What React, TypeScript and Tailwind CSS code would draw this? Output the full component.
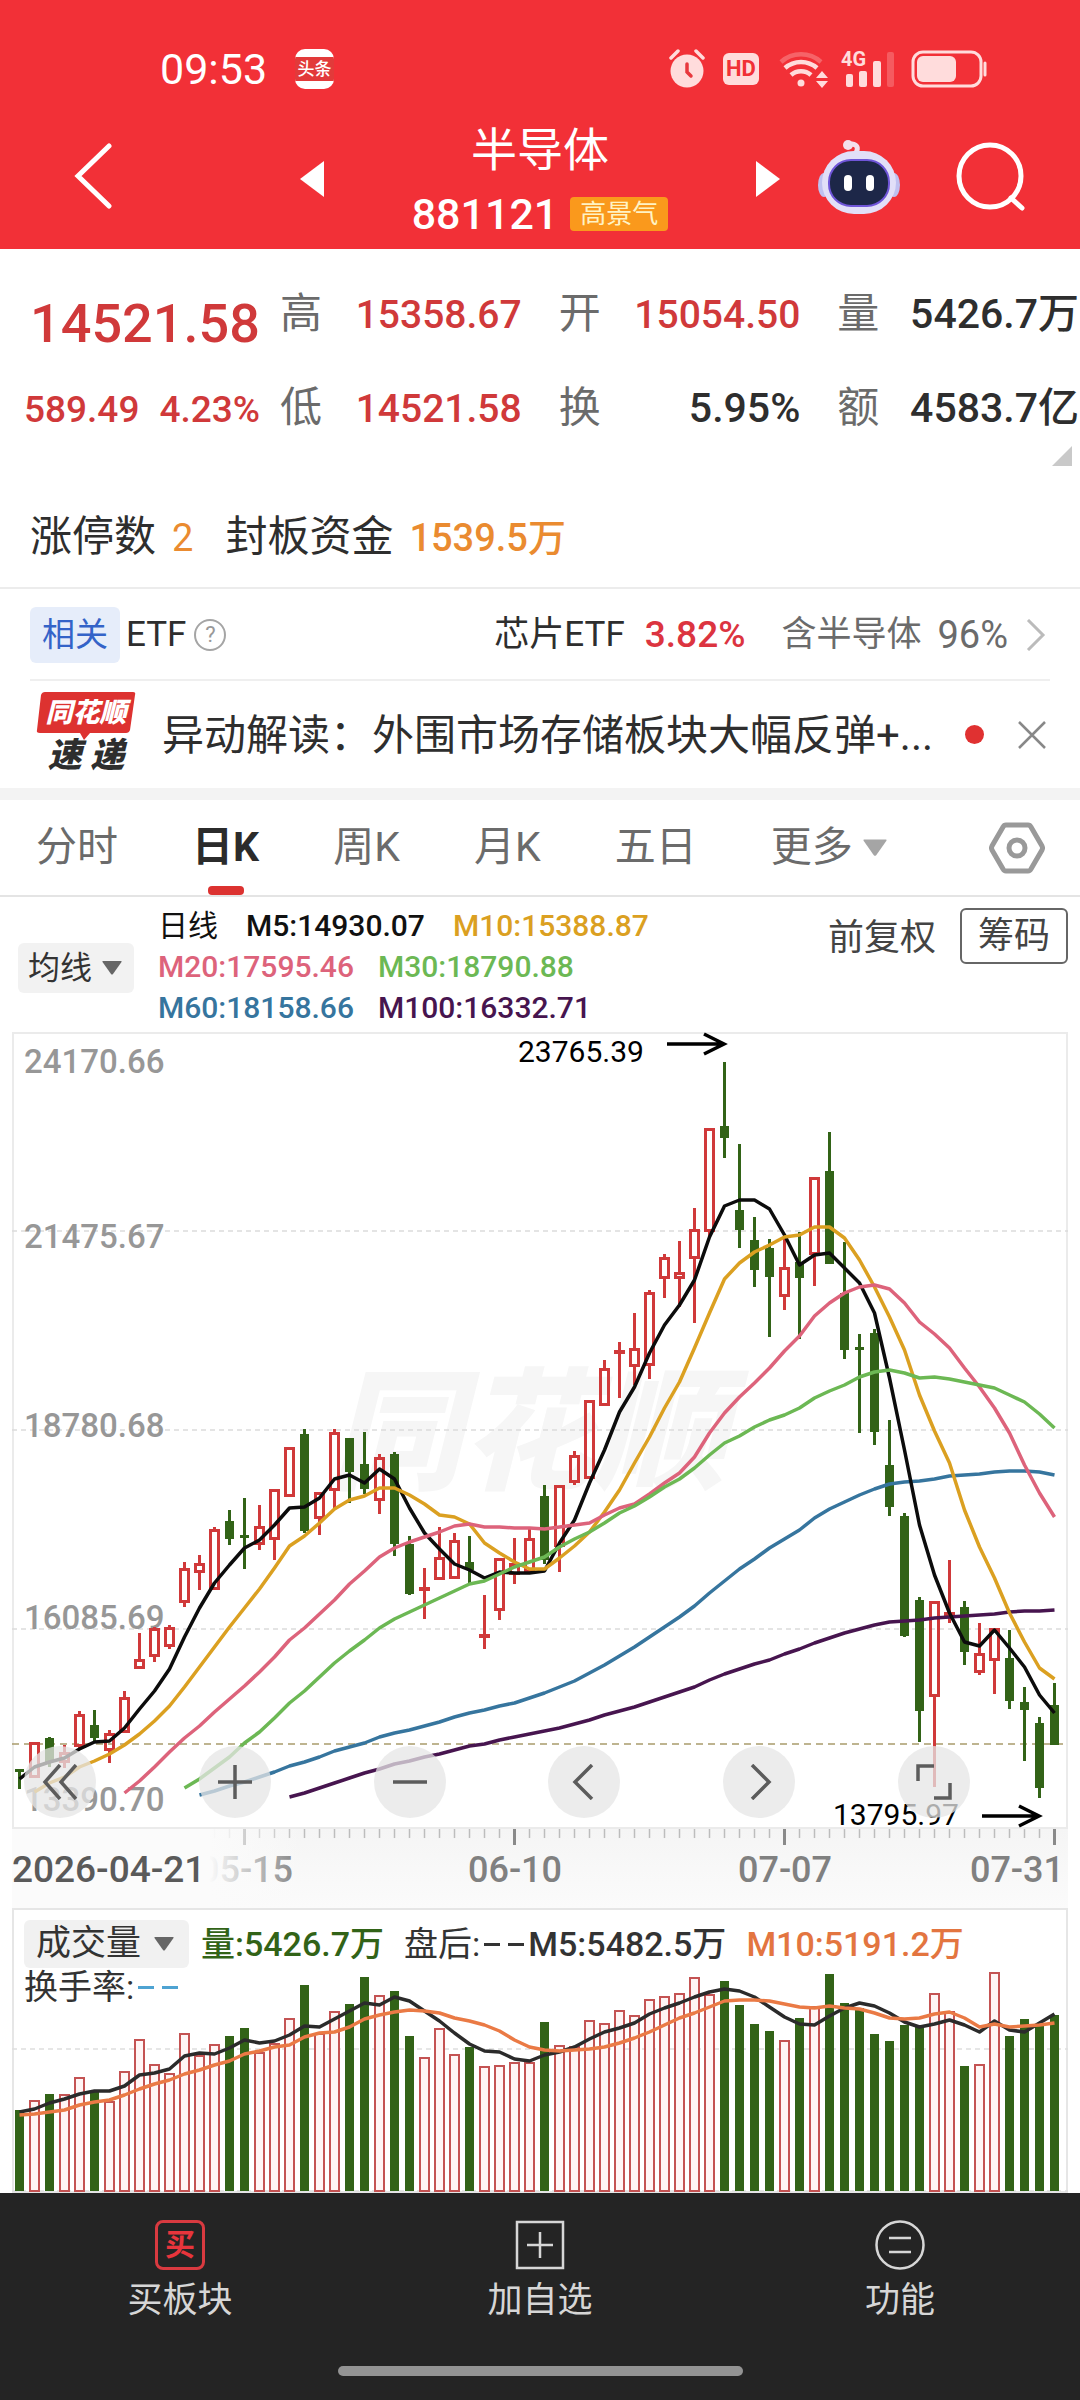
import type { ReactNode } from 'react'

const UP = '#d0393a'
const DOWN = '#326317'

// [rising, high, body top, body bottom, low, volume top]
const candles: [number, number, number, number, number, number][] = [
  [0, 737, 737, 740, 757, 202], [1, 710, 710, 746, 746, 192], [0, 705, 706, 730, 735, 186], [1, 713, 720, 731, 736, 186],
  [1, 679, 682, 715, 718, 169], [0, 678, 693, 706, 710, 184], [1, 698, 701, 719, 731, 193], [1, 659, 665, 701, 701, 163],
  [1, 601, 627, 637, 637, 131], [1, 595, 596, 625, 630, 156], [1, 593, 595, 615, 617, 165], [1, 530, 536, 571, 575, 125],
  [1, 523, 531, 541, 558, 147], [1, 495, 497, 558, 558, 136], [0, 478, 489, 507, 513, 128], [0, 466, 503, 506, 537, 120],
  [1, 473, 494, 513, 518, 144], [1, 457, 457, 508, 528, 135], [1, 415, 415, 465, 465, 110], [0, 397, 402, 499, 501, 77],
  [1, 460, 460, 487, 503, 125], [1, 397, 400, 459, 476, 103], [0, 406, 406, 440, 471, 96], [0, 400, 432, 457, 462, 69],
  [1, 422, 425, 469, 482, 87], [0, 420, 422, 512, 524, 83], [0, 504, 512, 562, 563, 128], [1, 536, 555, 559, 587, 149],
  [1, 495, 525, 548, 548, 120], [1, 501, 508, 547, 547, 146], [0, 504, 530, 538, 553, 139], [1, 563, 602, 606, 617, 158],
  [1, 526, 526, 579, 588, 157], [1, 506, 531, 543, 552, 154], [1, 496, 506, 541, 541, 154], [0, 453, 464, 528, 532, 114],
  [1, 453, 453, 515, 540, 137], [1, 419, 423, 451, 453, 138], [1, 368, 368, 447, 447, 112], [1, 328, 336, 374, 374, 115],
  [1, 310, 318, 321, 366, 102], [1, 281, 316, 335, 353, 107], [1, 258, 260, 334, 347, 91], [1, 222, 225, 247, 266, 88],
  [1, 209, 240, 247, 275, 85], [1, 176, 197, 227, 291, 69], [1, 96, 96, 200, 205, 86], [0, 30, 94, 106, 126, 73],
  [0, 112, 178, 198, 216, 97], [0, 185, 208, 238, 255, 116], [0, 207, 216, 245, 305, 123], [1, 206, 235, 265, 278, 132],
  [0, 200, 230, 246, 307, 110], [1, 145, 145, 223, 254, 98], [0, 100, 139, 232, 232, 66], [0, 210, 261, 318, 327, 95],
  [0, 302, 315, 318, 401, 100], [0, 297, 301, 400, 413, 126], [0, 388, 433, 475, 484, 133], [0, 481, 484, 604, 605, 117],
  [0, 565, 568, 679, 710, 119], [1, 569, 569, 665, 755, 85], [1, 528, 580, 583, 591, 103], [0, 569, 575, 620, 633, 158],
  [1, 591, 621, 641, 643, 156], [1, 596, 596, 629, 662, 64], [0, 598, 626, 669, 677, 128], [0, 655, 670, 678, 729, 111],
  [0, 685, 691, 756, 766, 117], [0, 651, 673, 713, 713, 107],
]

const averages = [
  { from: 18, color: '#47154f', ys: [765, 761, 756, 751, 746, 741, 737, 732, 729, 725, 722, 718, 714, 712, 708, 705, 702, 699, 696, 692, 688, 683, 679, 675, 670, 665, 660, 655, 648, 642, 637, 632, 628, 622, 617, 611, 606, 601, 597, 593, 590, 589, 588, 586, 585, 584, 583, 582, 580, 579, 579, 578] },
  { from: 12, color: '#36759e', ys: [763, 759, 754, 750, 745, 740, 734, 730, 725, 719, 715, 711, 705, 701, 698, 694, 690, 685, 681, 678, 674, 671, 666, 661, 655, 649, 641, 633, 624, 615, 605, 595, 585, 574, 561, 549, 537, 527, 516, 507, 498, 486, 477, 470, 463, 457, 452, 450, 449, 447, 444, 443, 442, 440, 439, 439, 440, 443] },
  { from: 0, color: '#0c0c0c', ys: [747, 735, 730, 726, 717, 710, 709, 696, 677, 659, 637, 605, 576, 551, 533, 516, 508, 493, 476, 475, 466, 447, 443, 451, 437, 447, 476, 501, 517, 532, 538, 546, 540, 541, 541, 539, 511, 488, 451, 418, 380, 355, 321, 293, 273, 248, 205, 174, 168, 168, 177, 203, 233, 223, 221, 236, 251, 281, 346, 418, 493, 543, 581, 610, 614, 598, 616, 635, 663, 681] },
  { from: 1, color: '#dba021', ys: [760, 751, 745, 735, 729, 722, 713, 702, 689, 674, 655, 635, 615, 595, 576, 557, 536, 514, 504, 491, 477, 468, 464, 456, 456, 463, 472, 483, 485, 492, 511, 521, 530, 537, 537, 526, 514, 500, 480, 458, 431, 405, 376, 350, 316, 281, 247, 231, 220, 213, 205, 203, 195, 195, 206, 228, 255, 285, 318, 363, 399, 431, 478, 515, 546, 581, 610, 636, 647] },
  { from: 7, color: '#dd637b', ys: [761, 749, 735, 720, 706, 694, 680, 667, 654, 640, 625, 608, 596, 582, 568, 552, 539, 525, 516, 510, 505, 500, 494, 492, 495, 495, 496, 496, 497, 495, 493, 491, 483, 476, 472, 462, 451, 441, 425, 401, 381, 365, 351, 336, 319, 304, 284, 271, 261, 255, 253, 257, 271, 290, 302, 316, 336, 355, 376, 401, 433, 461, 485] },
  { from: 11, color: '#6cb854', ys: [756, 747, 736, 725, 711, 700, 686, 671, 659, 645, 631, 619, 608, 596, 587, 580, 573, 566, 559, 552, 549, 542, 535, 530, 525, 515, 507, 500, 491, 481, 474, 465, 455, 447, 436, 423, 411, 404, 395, 388, 383, 376, 366, 359, 353, 345, 340, 338, 341, 346, 345, 347, 350, 353, 356, 363, 370, 382, 396] },
]

const volumeAverages = [
  { from: 0, color: '#2b2b2b', ys: [204, 201, 195, 191, 186, 183, 183, 178, 167, 165, 161, 148, 145, 146, 140, 132, 135, 133, 127, 118, 119, 111, 103, 95, 97, 89, 93, 103, 113, 125, 136, 143, 144, 151, 153, 147, 144, 139, 131, 124, 120, 115, 106, 100, 95, 89, 84, 81, 83, 89, 99, 109, 116, 117, 108, 100, 95, 98, 105, 114, 119, 116, 112, 117, 124, 113, 122, 124, 115, 106] },
  { from: 0, color: '#ea7a45', ys: [207, 206, 204, 202, 197, 194, 192, 187, 181, 176, 172, 166, 162, 157, 153, 146, 143, 139, 137, 129, 125, 124, 119, 111, 107, 104, 102, 103, 105, 110, 113, 117, 123, 132, 139, 142, 143, 142, 141, 139, 135, 130, 124, 117, 110, 105, 99, 93, 92, 92, 93, 96, 99, 100, 98, 100, 101, 105, 110, 111, 110, 106, 104, 110, 119, 116, 119, 118, 117, 115] },
]

const cx = (i: number) => 7.5 + i * 15

const Line = ({ from, color, ys }: { from: number; color: string; ys: number[] }) => (
  <polyline
    points={ys.map((y, i) => `${cx(from + i)},${y}`).join(' ')}
    fill="none"
    stroke={color}
    strokeWidth="3.500"
    strokeLinejoin="round"
  />
)

const Caret = ({ className }: { className: string }) => (
  <svg viewBox="0 0 20 14" className={`pointer-events-none absolute ${className}`} fill="currentColor">
    <path d="M1 0h18q1 0 .5 1L11 13q-1 1-2 0L.5 1Q0 0 1 0z" />
  </svg>
)

const StatusBar = () => (
  <div className="flex h-[120px] items-center justify-between pt-[18px] pr-[93px] pl-40">
    <div className="flex items-center gap-7">
      <span className="text-[43px] leading-[50px]">09:53</span>
      <span className="flex h-10 w-[39px] items-center overflow-hidden rounded-[10px] bg-white">
        <span className="w-full bg-[#e23a3a] text-center text-[17px] leading-6 font-medium">头条</span>
      </span>
    </div>
    <div className="flex items-center text-[#ffdcdc]">
      <svg viewBox="0 0 36 40" className="h-10 w-9" fill="none" stroke="currentColor">
        <circle cx="18" cy="22" r="16.500" fill="currentColor" stroke="none" />
        <path d="M2 9l7-7M34 9l-7-7" strokeWidth="3.500" strokeLinecap="round" />
        <path d="M18 15v8l4 4" stroke="#e8383e" strokeWidth="3.500" strokeLinecap="round" />
      </svg>
      <span className="ml-[18px] h-8 w-9 rounded-md bg-[#ffdcdc] text-center text-[22px] leading-8 font-bold text-[#f13036]">HD</span>
      <svg viewBox="0 0 50 40" className="ml-5 h-10 w-[50px]" fill="none" stroke="currentColor" strokeWidth="4.500">
        <path d="M2 13a30 30 0 0 1 40 0" opacity=".3" />
        <path d="M6 19a24 24 0 0 1 32 0M12 26a15 15 0 0 1 20 0" />
        <circle cx="22" cy="34" r="3.500" fill="currentColor" stroke="none" />
        <path d="M37 29l6-7 6 7zM37 32l6 7 6-7z" fill="currentColor" stroke="none" />
      </svg>
      <div className="relative ml-3 h-10 w-[54px]">
        <span className="absolute top-0 left-0 text-[20px] leading-5 font-bold">4G</span>
        <svg viewBox="0 0 54 40" className="h-10 w-[54px]" fill="currentColor">
          <rect x="5" y="25" width="7" height="13" rx="2" />
          <rect x="18" y="22" width="8" height="16" rx="2" />
          <rect x="32" y="12" width="8" height="26" rx="2" />
          <rect x="46" y="3" width="7" height="35" rx="2" opacity=".25" />
        </svg>
      </div>
      <svg viewBox="0 0 76 38" className="ml-4 h-[38px] w-[76px]" fill="none" stroke="currentColor">
        <rect x="2" y="2" width="68" height="34" rx="10" strokeWidth="3" />
        <rect x="6" y="6" width="39" height="26" rx="6" fill="currentColor" stroke="none" />
        <path d="M74 13v12" strokeWidth="3" strokeLinecap="round" />
      </svg>
    </div>
  </div>
)

const RobotIcon = () => (
  <svg viewBox="0 0 82 76" className="h-[76px] w-[82px]">
    <path d="M38 14q4-8-4-9" fill="none" stroke="#f4dfec" strokeWidth="5" strokeLinecap="round" />
    <circle cx="30" cy="6" r="5" fill="#f4dfec" />
    <ellipse cx="6" cy="46" rx="6" ry="12" fill="#bfc0f0" />
    <ellipse cx="76" cy="46" rx="6" ry="12" fill="#bfc0f0" />
    <rect x="4" y="12" width="74" height="63" rx="32" fill="#e2dff8" />
    <rect x="11" y="21" width="60" height="46" rx="22" fill="#1d2748" stroke="#6f55d8" strokeWidth="2" />
    <rect x="26" y="36" width="8" height="16" rx="4" fill="#fff" />
    <rect x="48" y="36" width="8" height="16" rx="4" fill="#fff" />
  </svg>
)

const TitleRow = () => (
  <div className="grid h-[129px] grid-cols-[1fr_480px_1fr]">
    <div className="flex items-center pb-[18px] pl-[74px]">
      <button aria-label="返回">
        <svg viewBox="0 0 38 66" className="h-[66px] w-[38px]" fill="none" stroke="currentColor" strokeWidth="5">
          <path d="M35 3L4 33l31 30" strokeLinecap="round" />
        </svg>
      </button>
    </div>
    <div className="flex items-center justify-between">
      <button aria-label="上一个" className="pb-3">
        <svg viewBox="0 0 24 36" className="h-9 w-6" fill="currentColor"><path d="M24 0v36L0 18z" /></svg>
      </button>
      <div className="flex flex-col items-center">
        <h1 className="text-[46px] leading-[58px]">半导体</h1>
        <div className="flex h-[70px] items-center gap-3">
          <span className="text-[43px] leading-[50px] font-medium">881121</span>
          <span className="rounded-sm bg-[#fa991c] px-[10px] text-[26px] leading-[34px] text-[#fff3c4]">高景气</span>
        </div>
      </div>
      <button aria-label="下一个" className="pb-3">
        <svg viewBox="0 0 24 36" className="h-9 w-6" fill="currentColor"><path d="M0 0v36l24-18z" /></svg>
      </button>
    </div>
    <div className="flex items-center justify-between pr-[54px] pb-4 pl-[38px]">
      <button aria-label="助手"><RobotIcon /></button>
      <button aria-label="搜索">
        <svg viewBox="0 0 70 70" className="size-[70px]" fill="none" stroke="currentColor" strokeWidth="5">
          <circle cx="34" cy="34" r="31" />
          <path d="M55 56l11 10" strokeLinecap="round" />
        </svg>
      </button>
    </div>
  </div>
)

const Quote = ({ label, value, up }: { label: string; value: string; up?: boolean }) => (
  <div className="flex items-baseline justify-between">
    <dt className="text-[42px] text-[#6b6b6b]">{label}</dt>
    <dd className={`font-medium ${up ? 'text-[39px] text-[#d0393a]' : 'text-[41px] text-[#2e2e2e]'}`}>{value}</dd>
  </div>
)

const QuotePanel = () => (
  <section className="border-b-2 border-[#ececec] pb-6">
    <div className="relative flex pt-[41px] pr-[1px]">
      <div className="w-[280px] shrink-0 font-medium text-[#d0393a]">
        <p className="pl-[30px] text-[54px] leading-[68px]">14521.58</p>
        <p className="flex gap-5 pt-7 pl-6 text-[37px] leading-12">
          <span>589.49</span>
          <span>4.23%</span>
        </p>
      </div>
      <dl className="grid grow grid-cols-3 gap-x-[37px] gap-y-11 leading-12">
        <Quote label="高" value="15358.67" up />
        <Quote label="开" value="15054.50" up />
        <Quote label="量" value="5426.7万" />
        <Quote label="低" value="14521.58" up />
        <Quote label="换" value="5.95%" />
        <Quote label="额" value="4583.7亿" />
      </dl>
      <svg viewBox="0 0 20 20" className="absolute right-2 -bottom-8 size-5" fill="#c9c9c9"><path d="M20 0v20H0z" /></svg>
    </div>
    <p className="flex items-baseline pt-[78px] pl-[30px] text-[42px] leading-[50px] text-[#2e2e2e]">
      涨停数
      <span className="ml-4 text-[38px] text-[#ea8b30]">2</span>
      <span className="ml-8">封板资金</span>
      <span className="ml-4 text-[38px] font-medium text-[#ea8b30]">1539.5万</span>
    </p>
  </section>
)

const EtfRow = () => (
  <div className="mx-[30px] flex h-[92px] items-center border-b-2 border-[#efefef] pt-[2px] text-[35px] text-[#2e2e2e]">
    <span className="rounded-md bg-[#e6edfa] px-3 text-[33px] leading-14 text-[#3463c8]">相关</span>
    <span className="ml-[6px]">ETF</span>
    <button aria-label="说明" className="ml-2 size-8 rounded-full border-2 border-[#a5a5a5] text-[22px] leading-7 text-[#999]">?</button>
    <a href="#etf" className="ml-auto flex items-center">
      <span>芯片ETF</span>
      <span className="ml-5 text-[37px] font-medium text-[#dc3440]">3.82%</span>
      <span className="ml-9 text-[#6b6b6b]">含半导体</span>
      <span className="ml-4 text-[38px] text-[#6b6b6b]">96%</span>
      <svg viewBox="0 0 20 32" className="mr-1 ml-[18px] h-8 w-5" fill="none" stroke="#bbb" strokeWidth="3"><path d="M2 1l15 15L2 31" /></svg>
    </a>
  </div>
)

const NewsRow = () => (
  <div className="flex h-[107px] items-center pr-[34px] pl-9 text-[#2e2e2e]">
    <div className="relative flex w-[100px] flex-col items-center pb-1 italic">
      <svg viewBox="0 0 100 50" className="absolute top-0 left-0 h-[50px] w-[100px]" fill="#dd3230">
        <path d="M9 1h88q3 0 2 3l-5 35q-1 3-4 3H54l-6 7-4-7H4q-4 0-3-3L5 4q1-3 4-3z" />
      </svg>
      <span className="relative text-[27px] leading-11 font-black text-white">同花顺</span>
      <span className="text-[34px] leading-10 font-black">速 递</span>
    </div>
    <a href="#news" className="ml-[26px] truncate pt-[3px] text-[42px] leading-[60px]">异动解读：外围市场存储板块大幅反弹+...</a>
    <span className="ml-auto size-[19px] shrink-0 rounded-full bg-[#e03131]" />
    <button aria-label="关闭" className="ml-[34px] shrink-0">
      <svg viewBox="0 0 28 28" className="size-7" fill="none" stroke="#888" strokeWidth="2.500"><path d="M1 1l26 26M27 1L1 27" /></svg>
    </button>
  </div>
)

const Tabs = () => (
  <nav className="flex h-[97px] items-center justify-between border-b-2 border-[#e4e4e4] pr-[35px] pl-9 text-[41px] text-[#6b6b6b]">
    <button>分时</button>
    <button className="relative h-full font-bold text-[#2b2b2b]">
      日K
      <span className="absolute inset-x-0 bottom-0 mx-auto h-[9px] w-9 rounded bg-[#dc3230]" />
    </button>
    <button>周K</button>
    <button>月K</button>
    <button>五日</button>
    <label className="relative flex text-[#6b6b6b]">
      <select aria-label="更多周期" className="appearance-none pr-[34px] outline-none"><option>更多</option></select>
      <Caret className="top-[21px] right-0 h-5 w-6 text-[#a5a5a5]" />
    </label>
    <button aria-label="设置" className="ml-7">
      <svg viewBox="0 0 56 52" className="h-[52px] w-14" fill="none" stroke="#999" strokeWidth="5">
        <path d="M17 3h22q2 0 3 2l11 19q1 2 0 4L42 47q-1 2-3 2H17q-2 0-3-2L3 28q-1-2 0-4L14 5q1-2 3-2z" />
        <circle cx="28" cy="26" r="8" />
      </svg>
    </button>
  </nav>
)

const Legend = () => (
  <div className="flex h-[135px] pr-3 pl-[18px]">
    <label className="relative mt-[46px] flex h-[50px] w-[116px] shrink-0 rounded-md bg-[#f2f2f2] text-[32px] text-[#333]">
      <select aria-label="指标" className="w-full appearance-none pl-[10px] leading-[50px] outline-none"><option>均线</option></select>
      <Caret className="top-[18px] right-3 h-[14px] w-5 text-[#666]" />
    </label>
    <div className="ml-6 pt-2 text-[30px] leading-[41px] font-medium">
      <p className="flex gap-7 text-[#111]">
        <span className="font-normal">日线</span>
        <span>M5:14930.07</span>
        <span className="text-[#dba021]">M10:15388.87</span>
      </p>
      <p className="flex gap-6">
        <span className="text-[#dd637b]">M20:17595.46</span>
        <span className="text-[#6cb854]">M30:18790.88</span>
      </p>
      <p className="flex gap-6">
        <span className="text-[#36759e]">M60:18158.66</span>
        <span className="text-[#47154f]">M100:16332.71</span>
      </p>
    </div>
    <div className="ml-auto flex items-start gap-6 pt-[11px] text-[36px] leading-[52px] text-[#444]">
      <button className="pt-1">前复权</button>
      <button className="rounded-md border-2 border-[#666] px-4">筹码</button>
    </div>
  </div>
)

const gridLabels: [string, number][] = [['24170.66', 41], ['21475.67', 216], ['18780.68', 405], ['16085.69', 597], ['13390.70', 779]]

const RoundButton = ({ label, children }: { label: string; children: ReactNode }) => (
  <button aria-label={label} className="flex size-[72px] items-center justify-center rounded-full bg-[#e6e6e6]/75">
    <svg viewBox="0 0 36 36" className="size-9" fill="none" stroke="#5c5c5c" strokeWidth="3.500">{children}</svg>
  </button>
)

const PriceChart = () => (
  <div className="relative mx-3 ring-2 ring-[#ebebeb] ring-inset">
    <svg viewBox="0 0 1056 797" className="block w-full overflow-visible">
      <text x="318" y="447" fontSize="132" fontWeight="900" fontStyle="italic" fill="#f6f6f6">同花顺</text>
      {[199, 398, 597].map((y) => (
        <path key={y} d={`M0 ${y}H1056`} stroke="#dcdcdc" strokeWidth="1.500" strokeDasharray="5 4" />
      ))}
      <g fill="#979797" fontSize="33" fontWeight="500">
        {gridLabels.map(([text, y]) => <text key={text} x="12" y={y}>{text}</text>)}
      </g>
      <path d="M0 712H1056" stroke="#a99c6c" strokeWidth="1.500" strokeDasharray="7 5" />
      {candles.map(([rising, high, top, bottom, low], i) => rising ? (
        <g key={i} fill="none" stroke={UP} strokeWidth="3">
          <path d={`M${cx(i)} ${high}V${top}M${cx(i)} ${bottom}V${low}`} />
          <rect x={cx(i) - 4} y={top + 1.5} width="8" height={Math.max(bottom - top - 3, 1)} />
        </g>
      ) : (
        <g key={i} fill={DOWN}>
          <rect x={cx(i) - 1.5} y={high} width="3" height={low - high} />
          <rect x={cx(i) - 4.5} y={top} width="9" height={bottom - top} />
        </g>
      ))}
      {averages.map((line) => <Line key={line.color} {...line} />)}
      <text x="506" y="30" fontSize="30">23765.39</text>
      <text x="821" y="793" fontSize="30">13795.97</text>
      <path d="M655 12h57M692 2l20 10-20 10M970 784h57M1007 774l20 10-20 10" fill="none" stroke="#000" strokeWidth="3.500" />
    </svg>
    <div className="absolute right-[98px] bottom-[11px] left-3 flex justify-between">
      <RoundButton label="最早"><path d="M18 1L3 18l15 17M34 1L19 18l15 17" /></RoundButton>
      <RoundButton label="放大"><path d="M18 1v34M1 18h34" /></RoundButton>
      <RoundButton label="缩小"><path d="M1 18h34" /></RoundButton>
      <RoundButton label="向左"><path d="M26 1L9 18l17 17" /></RoundButton>
      <RoundButton label="向右"><path d="M11 1l17 17-17 17" /></RoundButton>
      <RoundButton label="全屏"><path d="M2 17V2h16M34 19v15H18" /></RoundButton>
    </div>
  </div>
)

const DateAxis = () => (
  <div className="mx-3 bg-linear-to-b from-[#f5f5f5] to-[#fbfbfb]">
    <svg viewBox="0 0 1056 79" className="block w-full">
      <defs>
        <linearGradient id="fade">
          <stop offset=".68" stopColor="#fbfbfb" />
          <stop offset="1" stopColor="#fbfbfb" stopOpacity="0" />
        </linearGradient>
      </defs>
      {candles.map((_, i) => {
        const major = i % 18 === 15
        return <path key={i} d={`M${cx(i)} 0V${major ? 16 : 9}`} stroke={major ? '#8a8a8a' : '#bdbdbd'} strokeWidth={major ? 3 : 1.5} />
      })}
      <g fill="#808080" fontSize="36" fontWeight="500" textAnchor="middle">
        <text x="234" y="53">05-15</text>
        <text x="503" y="53">06-10</text>
        <text x="773" y="53">07-07</text>
        <text x="1052" y="53" textAnchor="end">07-31</text>
      </g>
      <rect width="290" height="79" fill="url(#fade)" />
      <text x="0" y="53" fill="#5a5a5a" fontSize="37" fontWeight="500">2026-04-21</text>
    </svg>
  </div>
)

const VolumeChart = () => (
  <div className="relative mx-3 ring-2 ring-[#e6e6e6] ring-inset">
    <svg viewBox="0 0 1056 285" className="block w-full">
      <path d="M0 141H1056M0 283H1056" stroke="#dedede" strokeWidth="1.500" strokeDasharray="5 4" />
      {candles.map(([rising, , , , , top], i) => rising ? (
        <rect key={i} x={cx(i) - 4.5} y={top + 1} width="9" height={282 - top} fill="#fff5f5" stroke="#c45353" strokeWidth="2" />
      ) : (
        <rect key={i} x={cx(i) - 4.5} y={top} width="9" height={283 - top} fill={DOWN} />
      ))}
      {volumeAverages.map((line) => <Line key={line.color} {...line} />)}
    </svg>
    <div className="absolute top-3 left-3 text-[34px] leading-[46px] text-[#333]">
      <div className="flex items-center font-medium whitespace-nowrap">
        <label className="relative flex h-12 w-[165px] rounded-md bg-[#f1f1f1] text-[35px] font-normal">
          <select aria-label="副图指标" className="w-full appearance-none pl-3 leading-12 outline-none"><option>成交量</option></select>
          <Caret className="top-[17px] right-[15px] h-[14px] w-5 text-[#666]" />
        </label>
        <span className="ml-3 text-[#326317]">量:5426.7万</span>
        <span className="ml-5 font-normal">盘后:</span>
        <span className="flex gap-2 px-1"><i className="h-[3px] w-4 bg-[#333]" /><i className="h-[3px] w-4 bg-[#333]" /></span>
        <span>M5:5482.5万</span>
        <span className="ml-5 text-[#e37540]">M10:5191.2万</span>
      </div>
      <div className="-mt-1 flex items-center">
        换手率:
        <span className="flex gap-2 pl-1"><i className="h-[3px] w-4 bg-[#4ea3d2]" /><i className="h-[3px] w-4 bg-[#4ea3d2]" /></span>
      </div>
    </div>
  </div>
)

const BottomBar = () => (
  <footer className="bg-[#242424] text-[35px] leading-11 text-[#d6d6d6]">
    <div className="grid h-[173px] grid-cols-3 pt-[27px]">
      <button className="flex flex-col items-center gap-[9px]">
        <span className="size-[50px] rounded-lg border-3 border-[#d93a40] text-[30px] leading-11 font-bold text-[#e8353c]">买</span>
        买板块
      </button>
      <button className="flex flex-col items-center gap-[9px]">
        <svg viewBox="0 0 50 50" className="size-[50px]" fill="none" stroke="currentColor" strokeWidth="2.500">
          <path d="M2 2h46v46H2zM25 12v26M12 25h26" />
        </svg>
        加自选
      </button>
      <button className="flex flex-col items-center gap-[9px]">
        <svg viewBox="0 0 50 50" className="size-[50px]" fill="none" stroke="currentColor" strokeWidth="2.500">
          <circle cx="25" cy="25" r="23.500" />
          <path d="M14 18h22M14 32h22" />
        </svg>
        功能
      </button>
    </div>
    <div className="flex justify-center pb-6">
      <span className="h-[10px] w-[405px] rounded-full bg-[#939393]" />
    </div>
  </footer>
)

export default function App() {
  return (
    <div className="bg-white font-['Roboto','Noto_Sans_CJK_SC',sans-serif]">
      <header className="bg-[#f23037] text-white">
        <StatusBar />
        <TitleRow />
      </header>
      <QuotePanel />
      <EtfRow />
      <NewsRow />
      <div className="h-3 bg-[#f3f3f3]" />
      <Tabs />
      <Legend />
      <PriceChart />
      <DateAxis />
      <VolumeChart />
      <BottomBar />
    </div>
  )
}
